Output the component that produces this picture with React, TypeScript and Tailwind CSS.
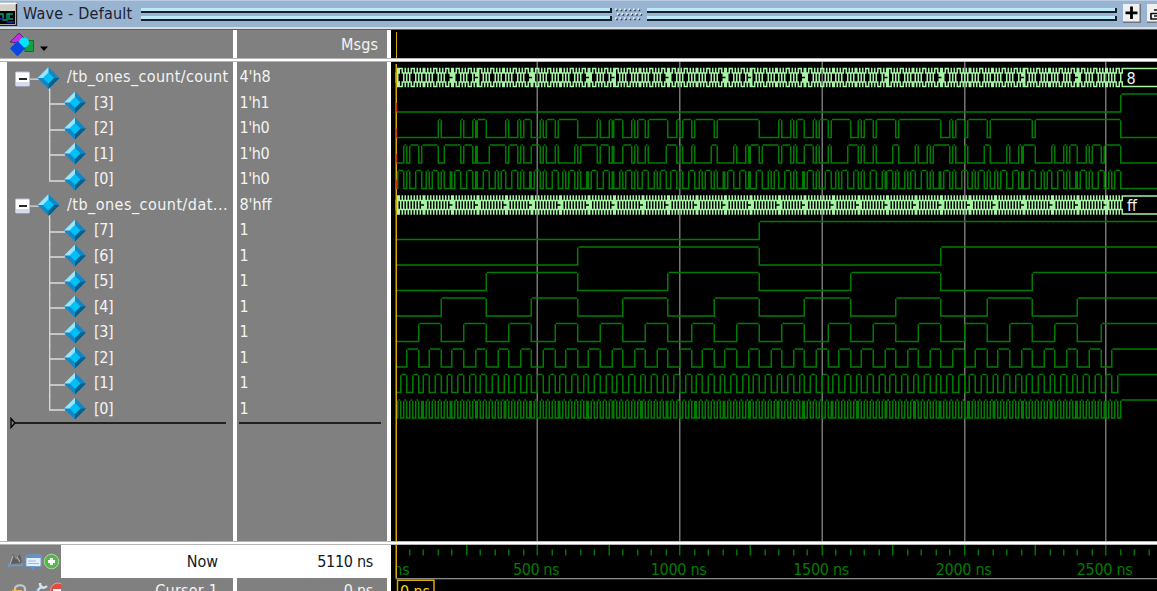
import React from "react";

const FONT = "font-['DejaVu_Sans_Condensed','DejaVu_Sans',sans-serif]";

/* ---------- signal model ---------- */

const PX = 1.5;
const ORIGIN = 5;
const LAST = 255;
const END = 520;
const HIGH = 6.5;
const PITCH = 25.5;

const col = (ns: number) => Math.floor(ns * 0.18957);
const popcount = (n: number) => {
  let c = 0;
  for (let v = n; v > 0; v >>= 1) c += v & 1;
  return c;
};
const xs = (k: number) => (ORIGIN - 0.5 + PX * k).toFixed(2);
const box = (k: number, r: number, w: number, h: number, top: number) =>
  `M${xs(k)} ${(top + r * PX).toFixed(2)}h${w * PX}v${h * PX}h${-w * PX}z`;

function edges(value: (i: number) => number) {
  const out: { k: number; v: number }[] = [{ k: 0, v: value(0) }];
  for (let i = 1; i <= LAST; i++) {
    const v = value(i);
    if (v !== out[out.length - 1].v) out.push({ k: col(i * 10), v });
  }
  return out;
}

function bitPath(value: (i: number) => number, row: number) {
  const top = HIGH + row * PITCH - 0.75;
  const list = edges(value);
  let d = "";
  list.forEach((e, n) => {
    const next = n + 1 < list.length ? list[n + 1].k : END;
    if (n > 0) d += box(e.k, 1, 1, 12, top);
    if (e.v) d += next - e.k > 1 ? box(e.k + 1, 0, next - e.k - 1, 1, top) : "";
    else d += box(e.k + (n > 0 ? 1 : 0), 12, next - e.k - (n > 0 ? 1 : 0), 1, top);
  });
  return d;
}

function busPath(value: (i: number) => number, row: number) {
  const top = HIGH + row * PITCH - 0.75;
  const list = edges(value);
  let d = "";
  list.forEach((e, n) => {
    const next = n + 1 < list.length ? list[n + 1].k : END;
    const narrow = next - e.k === 1 && n > 0;
    const afterNarrow = n > 1 && e.k - list[n - 1].k === 1;
    if (narrow || afterNarrow) d += box(e.k, 3, 1, 3, top) + box(e.k, 7, 1, 3, top);
    else d += box(e.k, 3, 1, 7, top);
    if (afterNarrow) d += box(e.k + 1, 0, 1, 13, top);
    else d += box(e.k + 1, 0, 1, 4, top) + box(e.k + 1, 9, 1, 4, top);
    if (next - e.k > 2) {
      d += box(e.k + 2, 0, next - e.k - 2, 1, top) + box(e.k + 2, 12, next - e.k - 2, 1, top);
      if (next !== END) d += box(next - 1, 0, 1, 4, top) + box(next - 1, 9, 1, 4, top);
    }
  });
  return d;
}

type Signal = { label: string; value: string; kind: "bus" | "bit"; fn: (i: number) => number; last?: boolean; tracking?: string };

const countBit = (b: number) => (i: number) => (popcount(i) >> b) & 1;
const dataBit = (b: number) => (i: number) => (i >> b) & 1;

const signals: Signal[] = [
  { label: "/tb_ones_count/count", value: "4'h8", kind: "bus", fn: popcount, tracking: "tracking-[0.35px]" },
  { label: "[3]", value: "1'h1", kind: "bit", fn: countBit(3) },
  { label: "[2]", value: "1'h0", kind: "bit", fn: countBit(2) },
  { label: "[1]", value: "1'h0", kind: "bit", fn: countBit(1) },
  { label: "[0]", value: "1'h0", kind: "bit", fn: countBit(0), last: true },
  { label: "/tb_ones_count/dat...", value: "8'hff", kind: "bus", fn: (i) => i, tracking: "tracking-[0.47px]" },
  { label: "[7]", value: "1", kind: "bit", fn: dataBit(7) },
  { label: "[6]", value: "1", kind: "bit", fn: dataBit(6) },
  { label: "[5]", value: "1", kind: "bit", fn: dataBit(5) },
  { label: "[4]", value: "1", kind: "bit", fn: dataBit(4) },
  { label: "[3]", value: "1", kind: "bit", fn: dataBit(3) },
  { label: "[2]", value: "1", kind: "bit", fn: dataBit(2) },
  { label: "[1]", value: "1", kind: "bit", fn: dataBit(1) },
  { label: "[0]", value: "1", kind: "bit", fn: dataBit(0), last: true },
];

/* ---------- drawings ---------- */

function Gem({ x, y }: { x: number; y: number }) {
  return (
    <g transform={`translate(${x} ${y})`}>
      <path d="M0-11 11 0 0 11-11 0z" fill="#1088c8" />
      <path d="M0-11V-5L-5 0H-11z" fill="#9ce4f8" />
      <path d="M0 11V5L5 0H11z" fill="#00608c" />
      <path d="M0-5.5 5.5 0 0 5.5-5.5 0z" fill="#00c0f8" />
    </g>
  );
}

function TreeGlyph({ s }: { s: Signal }) {
  if (s.kind === "bus")
    return (
      <svg className="h-[25.5px] w-[60px] shrink-0 overflow-visible" viewBox="0 0 60 25.5">
        <path d="M22 14.2H32M42.5 20V26" stroke="#dcdcdc" strokeWidth="1.3" fill="none" />
        <rect x="8.5" y="7" width="14" height="14" rx="1" fill="#fff" stroke="#b8c0d8" strokeWidth="1" />
        <path d="M9 17H22V20.5H9z" fill="#d4dbee" />
        <path d="M12 14H20" stroke="#111" strokeWidth="1.8" />
        <Gem x={41.5} y={13} />
      </svg>
    );
  return (
    <svg className="h-[25.5px] w-[87px] shrink-0 overflow-visible" viewBox="0 0 87 25.5">
      <path d={s.last ? "M42.7 0V14H58" : "M42.7 0V26M42.7 14H58"} stroke="#dcdcdc" strokeWidth="1.3" fill="none" />
      <Gem x={68} y={12.6} />
    </svg>
  );
}

function WaveIcon() {
  return (
    <svg className="h-[24px] w-[18px]" viewBox="0 0 18 24">
      <path d="M0 1H17V24H0z" fill="#d4d0c8" />
      <path d="M0 1.5H16" stroke="#fff" strokeWidth="1.5" />
      <path d="M0 9H15V22H0z" fill="#000" />
      <path d="M16.5 2V23.5H0" stroke="#222" strokeWidth="1.4" fill="none" />
      <path d="M0 12H3V18H7V12H13M9 12V17H13" stroke="#00a070" strokeWidth="1.4" fill="none" />
      <path d="M0 17H4M7 20H14" stroke="#3020d0" strokeWidth="1.5" />
    </svg>
  );
}

function ShapesIcon() {
  return (
    <svg className="h-[26px] w-[42px]" viewBox="0 0 42 26">
      <path d="M16 9.500H24.500V20.500H16z" fill="#18a040" stroke="#087028" />
      <path d="M1 11 10 2 15 7 10 12z" fill="#c030e0" stroke="#601070" strokeWidth=".8" />
      <circle cx="15" cy="11.5" r="5" fill="#00e4ff" />
      <path d="M8.500 10 16 17.500 8.500 25.500 1 17.500z" fill="#0848e0" />
      <path d="M31 15.500H39L35 20z" fill="#000" />
    </svg>
  );
}

function FooterIcons() {
  return (
    <svg className="h-[47px] w-[70px] overflow-visible" viewBox="0 0 70 47">
      <path d="M9 19 13 9 16 15 20 9 22 18z" fill="#5c5c5c" />
      <path d="M10 19 13 11M17 12 20 17" stroke="#b0b0b0" strokeWidth="1.3" />
      <path d="M9 20.500H22M9 18.500V22.500M22 17.500V21.500" stroke="#5aa0e8" strokeWidth="1.4" />
      <rect x="26" y="10" width="15" height="11.500" rx="1" fill="#e8f0fc" stroke="#6f9fdd" />
      <path d="M26 10H41V13H26z" fill="#5b92dc" />
      <path d="M28 16H36M28 18.500H39" stroke="#9cb8dc" />
      <path d="M29 21.500H36L32.500 25z" fill="#5b92dc" />
      <circle cx="51.500" cy="16.500" r="7.300" fill="#55b84a" stroke="#a8dca0" />
      <path d="M51.500 13V20M48 16.500H55" stroke="#fff" strokeWidth="3" />
      <path d="M15 47V44C15 39 25 39 25 44V47" fill="none" stroke="#c8c8c8" strokeWidth="2.200" />
      <path d="M12 45H22V47H12z" fill="#e8b840" />
      <path d="M36 47 42 41M40 38C40 43 44 44 47 41" fill="none" stroke="#d8e2ee" strokeWidth="2.400" />
      <path d="M35 45 38 47" stroke="#5a96dc" strokeWidth="2" />
      <circle cx="58" cy="45.500" r="7.500" fill="#e04a40" stroke="#f49a90" />
      <path d="M53 45.500H63" stroke="#fff" strokeWidth="3" />
    </svg>
  );
}

function Grip() {
  const dots: React.ReactElement[] = [];
  for (let r = 0; r < 3; r++)
    for (let c = 0; c < 6; c++) {
      const x = 2 + c * 4.5 + (r === 1 ? 2 : 0);
      const y = 1.5 + r * 4.5;
      dots.push(
        <g key={`${r}-${c}`}>
          <rect x={x + 1} y={y + 1} width="1.7" height="1.7" fill="#26313d" />
          <rect x={x} y={y} width="1.7" height="1.7" fill="#e6f4fb" />
        </g>
      );
    }
  return <svg className="h-[15px] w-[33px] shrink-0" viewBox="0 0 33 15">{dots}</svg>;
}

function Rails() {
  return (
    <div className="flex min-w-0 flex-1 flex-col gap-[3px]">
      {[0, 1].map((n) => (
        <div key={n} className="h-[5px] border-r-2 border-b-2 border-[#16202a] bg-[#bce8f8]" />
      ))}
    </div>
  );
}

function Waves() {
  return (
    <svg className="block h-[479px] w-[766px]" viewBox="0 0 766 479">
      <g fill="#747474">
        {[500, 1000, 1500, 2000, 2500].map((t) => (
          <rect key={t} x={xs(col(t))} y="0" width="1.5" height="479" />
        ))}
      </g>
      {signals.map((s, r) => (
        <path key={r} d={s.kind === "bus" ? busPath(s.fn, r) : bitPath(s.fn, r)} fill={s.kind === "bus" ? "#a4f4a4" : "#007c00"} />
      ))}
      <rect x="4.5" y="2" width="1.5" height="477" fill="#d4a800" />
      {[1, 2, 3, 4].map((r) => (
        <rect key={r} x="4.5" y={HIGH + r * PITCH + 9} width="1.5" height="9.5" fill="#d83800" />
      ))}
      <g className={FONT} fill="#f4f4f4" fontSize="16">
        <text x="735.5" y="21.8">8</text>
        <text x="736" y="149" textLength="13">ff</text>
      </g>
    </svg>
  );
}

function Ruler() {
  const ticks = Array.from({ length: 53 }, (_, n) => (n + 1) * 50);
  return (
    <svg className="block h-[46px] w-[766px]" viewBox="0 0 766 46">
      <g fill="#007400">
        {ticks.map((t) => (
          <rect key={t} x={xs(col(t))} y={t % 250 === 0 ? 0 : 4.5} width="1.5" height={t % 250 === 0 ? 10.5 : 6} />
        ))}
      </g>
      <g className={FONT} fill="#007c00" fontSize="16" textAnchor="middle">
        <text x="18.8" y="30" textAnchor="end">ns</text>
        {[500, 1000, 1500, 2000, 2500].map((t) => (
          <text key={t} x={ORIGIN + PX * col(t) - 0.8} y="30" textLength={t > 500 ? 56 : 46.5}>
            {t} ns
          </text>
        ))}
      </g>
      <rect x="0" y="0" width="4.5" height="33" fill="#000" />
      <rect x="4.5" y="0" width="1.5" height="33" fill="#d4a800" />
      <rect x="4.5" y="33" width="762" height="1.3" fill="#8a8a8a" />
      <path d="M6.5 46V35.3H43V46" fill="none" stroke="#d8ac00" strokeWidth="1.5" />
      <text x="9" y="52" className={FONT} fill="#f0dc00" fontSize="16" textLength="30">0 ns</text>
    </svg>
  );
}

/* ---------- page ---------- */

export default function App() {
  return (
    <div className={`flex h-[591px] w-[1157px] flex-col overflow-hidden bg-white text-[16px] leading-none whitespace-nowrap text-[#f4f4f4] ${FONT}`}>
      <header className="flex h-[27px] shrink-0 items-center border-t border-[#b8cde4] bg-[#99b4d1]">
        <WaveIcon />
        <h1 className="ml-[5px] w-[118px] shrink-0 text-[16px] tracking-[0.22px] text-[#1c2230]">Wave - Default</h1>
        <div className="flex w-[976px] shrink-0 items-center gap-px">
          <Rails />
          <Grip />
          <Rails />
        </div>
        <svg className="ml-[6px] h-[20px] w-[34px] shrink-0" viewBox="0 0 34 20">
          <path d="M0 0H18V19H0zM24 0H34V19H24z" fill="#6d7378" />
          <path d="M0 0H16.5V17.5H0zM24 0H34V17.5H24z" fill="#f0f0f0" />
          <path d="M8.5 2.5V15M2.5 8.800H14.5" stroke="#000" strokeWidth="2.8" />
          <path d="M28 9.5H34M28 9V15H34M31 6H34M31 12H34" fill="none" stroke="#111" strokeWidth="1.7" />
        </svg>
      </header>
      <div className="h-[3px] shrink-0 border-b border-[#606060] bg-[#dcdcdc]" />

      <div className="flex h-[28px] shrink-0">
        <div className="w-[233px] bg-[#808080] pl-[9px] pt-px">
          <ShapesIcon />
        </div>
        <div className="ml-[4px] flex w-[150px] items-center justify-end bg-[#808080] pt-[2px] pr-[9px] tracking-[0.1px]">Msgs</div>
        <div className="ml-[4px] flex-1 bg-black pt-[2px] pl-[4.5px]">
          <div className="h-[26px] w-[1.5px] bg-[#d4a800]" />
        </div>
      </div>
      <div className="h-[4px] shrink-0 border-y border-[#b4b4b4] bg-white" />

      <main className="flex h-[479px] shrink-0">
        <section className="ml-[7px] w-[226px] bg-[#808080] pt-[2.5px]">
          {signals.map((s, n) => (
            <div key={n} className="flex h-[25.5px] items-center">
              <TreeGlyph s={s} />
              <span className={s.tracking ?? "tracking-[-0.4px]"}>{s.label}</span>
            </div>
          ))}
          <svg className="block h-[10px] w-[226px] overflow-visible" viewBox="0 0 226 10">
            <path d="M4 -3.500V5.500L8 1z" fill="none" stroke="#000" strokeWidth="1.3" />
            <path d="M8 1H219" stroke="#000" strokeWidth="1.5" />
          </svg>
        </section>
        <section className="ml-[4px] w-[150px] bg-[#808080] pt-[2.5px]">
          {signals.map((s, n) => (
            <div key={n} className={`flex h-[25.5px] items-center pl-[2.5px] ${s.kind === "bus" ? "tracking-[-0.1px]" : "tracking-[-0.4px]"}`}>
              {s.value}
            </div>
          ))}
          <svg className="block h-[10px] w-[150px]" viewBox="0 0 150 10">
            <path d="M2 1H144" stroke="#000" strokeWidth="1.5" />
          </svg>
        </section>
        <section className="ml-[4px] w-[766px] bg-black">
          <Waves />
        </section>
      </main>
      <div className="h-[4px] shrink-0 border-y border-[#b4b4b4] bg-white" />

      <footer className="flex h-[46px] shrink-0">
        <div className="w-[61px] shrink-0 bg-[#808080]">
          <FooterIcons />
        </div>
        <div className="flex w-[172px] flex-col">
          <div className="flex h-[33px] items-center justify-end pr-[15px] text-[#101828]">Now</div>
          <div className="flex h-[13px] items-start justify-end overflow-hidden bg-[#808080] pt-[5px] pr-[15px] tracking-[0.2px]">Cursor 1</div>
        </div>
        <div className="ml-[4px] flex w-[150px] flex-col tracking-[-0.3px]">
          <div className="flex h-[33px] items-center justify-end pr-[14px] text-[#101828]">5110 ns</div>
          <div className="flex h-[13px] items-start justify-end overflow-hidden bg-[#808080] pt-[5px] pr-[14px]">0 ns</div>
        </div>
        <div className="ml-[4px] w-[766px] bg-black">
          <Ruler />
        </div>
      </footer>
    </div>
  );
}
